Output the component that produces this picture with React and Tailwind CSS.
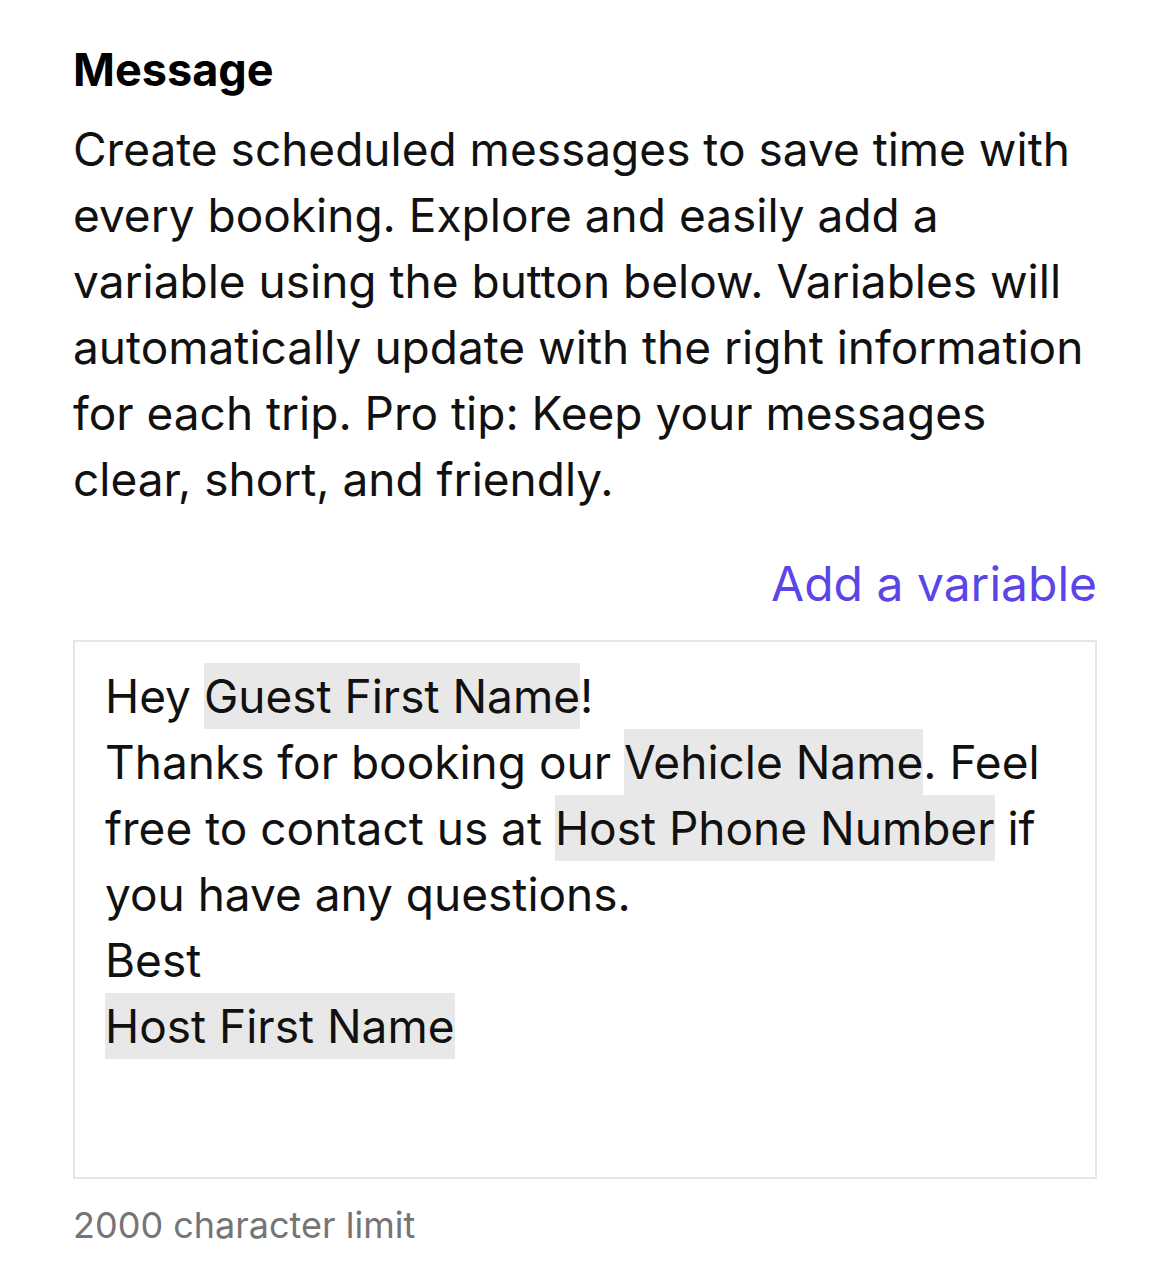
import React from "react";

const Var = ({ children }) => (
  <span className="bg-[#e8e8e8] inline-block leading-[66px]">{children}</span>
);

const App = () => {
  return (
    <div
      className="min-h-screen bg-white text-[#111111] pl-[73px] pr-[66px] pt-[40px]"
      style={{ fontFamily: "Inter, 'Liberation Sans', sans-serif" }}
    >
      <h2 className="text-[45px] font-bold leading-[60px] text-black">Message</h2>
      <p className="mt-[16px] text-[46px] leading-[66px] text-[#111111]">
        Create scheduled messages to save time with
        <br />
        every booking. Explore and easily add a
        <br />
        variable using the button below. Variables will
        <br />
        automatically update with the right information
        <br />
        for each trip. Pro tip: Keep your messages
        <br />
        clear, short, and friendly.
      </p>

      <div className="flex justify-end mt-[42px]">
        <button className="text-[48px] leading-[60px] text-[#5b45e8]">
          Add a variable
        </button>
      </div>

      <div className="mt-[26px] h-[539px] border-2 border-[#e6e6e6] pl-[30px] pr-[31px] pt-[21px] text-[46px] leading-[66px] text-[#111111]">
        <div>
          Hey <Var>Guest First Name</Var>!
        </div>
        <div>
          Thanks for booking our <Var>Vehicle Name</Var>. Feel
          <br />
          free to contact us at <Var>Host Phone Number</Var> if
          <br />
          you have any questions.
        </div>
        <div>Best</div>
        <div>
          <Var>Host First Name</Var>
        </div>
      </div>

      <p className="mt-[24px] text-[36px] leading-[44px] text-[#757575]">
        2000 character limit
      </p>
    </div>
  );
};

export default App;
